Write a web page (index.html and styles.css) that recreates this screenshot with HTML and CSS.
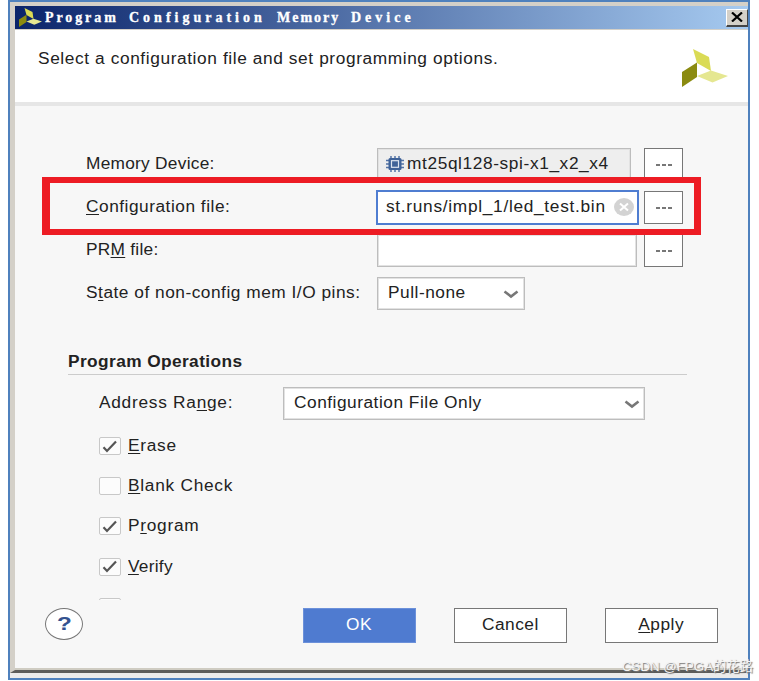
FILE: index.html
```html
<!DOCTYPE html>
<html lang="en">
<head>
<meta charset="utf-8">
<title>Program Configuration Memory Device</title>
<link rel="stylesheet" href="styles.css">
</head>
<body>
<svg class="defs" width="0" height="0">
  <symbol id="logo" viewBox="0 0 46 38">
    <path d="M11 0 27 8 29 22 15 14Z" fill="#dadb55"/>
    <path d="M0 23 15 13.500V28L0 38Z" fill="#8b8b10"/>
    <path d="M15 27 29 21.500 46 27 30.500 33.500Z" fill="#e5e791"/>
  </symbol>
  <symbol id="chevron" viewBox="0 0 16 9"><path d="M1.500 1.500 8 6.500 14.500 1.500" fill="none" stroke="#777" stroke-width="2.600"/></symbol>
  <symbol id="check" viewBox="0 0 16 13"><path d="M1.500 7.200 5 11 14 1.500" fill="none" stroke="#555" stroke-width="2.200"/></symbol>
</svg>
<div class="frame">
  <div class="window">
    <header class="titlebar">
      <svg class="title-logo"><use href="#logo"/></svg>
      <h1><span class="w1">Program</span> <span class="w2">Configuration</span> <span class="w3">Memory</span> <span class="w4">Device</span></h1>
      <button class="close" aria-label="Close"><svg width="12" height="10" viewBox="0 0 12 10"><path d="M1 .5 11 9.500M11 .5 1 9.500" stroke="#000" stroke-width="2.200"/></svg></button>
    </header>
    <section class="intro">
      <p><span class="t intro-text">Select a configuration file and set programming options.</span></p>
      <svg class="logo"><use href="#logo"/></svg>
    </section>
    <main>
      <div class="settings">
        <label class="row"><span class="name"><span class="t tight">Memory Device:</span></span>
          <span class="field readonly">
            <svg class="chip" viewBox="0 0 18 16"><path d="M5 0V16M9 0V16M13 0V16M0 4.500H18M0 8H18M0 11.500H18" stroke="#5474a6" stroke-width="1.500"/><rect x="2.500" y="2" width="13" height="12" rx="1.500" fill="#3f6298"/><rect x="5.500" y="4.700" width="7" height="6.600" fill="#3f6298" stroke="#dce4ef" stroke-width="1.200"/></svg>
            <span class="t device">mt25ql128-spi-x1_x2_x4</span></span>
          <button class="browse"><i></i><i></i><i></i></button></label>
        <label class="row"><span class="name"><span class="t"><u>C</u>onfiguration file:</span></span>
          <span class="field active"><span class="t path">st.runs/impl_1/led_test.bin</span>
            <svg class="clear" viewBox="0 0 20 18"><ellipse cx="10" cy="9" rx="10" ry="9" fill="#d3d3d3"/><path d="M6 5.500 14 12.500M14 5.500 6 12.500" stroke="#fff" stroke-width="2"/></svg></span>
          <button class="browse"><i></i><i></i><i></i></button></label>
        <label class="row"><span class="name"><span class="t tight">PR<u>M</u> file:</span></span>
          <span class="field"></span>
          <button class="browse"><i></i><i></i><i></i></button></label>
        <label class="row"><span class="name"><span class="t">S<u>t</u>ate of non-config mem I/O pins:</span></span>
          <span class="field select"><span class="t">Pull-none</span><svg class="chevron"><use href="#chevron"/></svg></span></label>
        <div class="highlight"></div>
      </div>
      <section class="operations">
        <h2><span class="t heading">Program Operations</span></h2>
        <div class="range"><span class="name"><span class="t loose">Address Ra<u>n</u>ge:</span></span>
          <span class="field wide"><span class="t">Configuration File Only</span><svg class="chevron"><use href="#chevron"/></svg></span></div>
        <div class="checks">
          <label><span class="box"><svg><use href="#check"/></svg></span><span class="t loose"><u>E</u>rase</span></label>
          <label><span class="box"></span><span class="t loose"><u>B</u>lank Check</span></label>
          <label><span class="box"><svg><use href="#check"/></svg></span><span class="t loose">P<u>r</u>ogram</span></label>
          <label><span class="box"><svg><use href="#check"/></svg></span><span class="t tight"><u>V</u>erify</span></label>
          <label><span class="box"></span></label>
        </div>
      </section>
      <footer>
        <button class="help"><b>?</b></button>
        <button class="action primary"><span class="t">OK</span></button>
        <button class="action"><span class="t">Cancel</span></button>
        <button class="action"><span class="t"><u>A</u>pply</span></button>
      </footer>
    </main>
  </div>
</div>
<div class="watermark">CSDN @FPGA的花路</div>
</body>
</html>
```
FILE: styles.css
```css
* { box-sizing: border-box; }
body {
  margin: 0;
  width: 759px;
  height: 681px;
  overflow: hidden;
  position: relative;
  background: #fff;
  color: #222;
  font: 16px/20px "Liberation Sans", Arial, sans-serif;
}
.defs { position: absolute; }
svg { display: block; flex: none; }
h1, h2, p { margin: 0; }
button { font: inherit; color: inherit; padding: 0; border-radius: 0; }
u { text-decoration-thickness: 1px; text-underline-offset: 2px; }
.t {
  display: inline-block;
  white-space: nowrap;
  letter-spacing: .480px;
  transform: scaleX(1.08);
  transform-origin: left;
}
.tight { letter-spacing: .250px; }
.loose { letter-spacing: .680px; }
.heading { letter-spacing: .380px; }
.intro-text { letter-spacing: .560px; }

.frame {
  width: 742px;
  height: 680px;
  margin-left: 8px;
  border: 2px solid #4f81bd;
  background: #ebebeb;
}
.window {
  height: 671px;
  border-left: 5px solid #d4d0c8;
  border-top: 4px solid #d4d0c8;
  border-bottom: 3px solid #5c5c5a;
  box-shadow: inset 0 -2px #cfccc2;
  background: #f7f7f7;
}
.titlebar {
  height: 23px;
  display: flex;
  align-items: center;
  background: linear-gradient(90deg, #0a246a, #a6caf0);
  color: #fff;
}
.title-logo { width: 25px; height: 19px; margin: 0 2px 0 3px; }
.titlebar h1 {
  display: flex;
  font: bold 14px/20px "Liberation Serif", serif;
  -webkit-text-stroke: .3px #fff;
  white-space: nowrap;
}
.w1 { width: 84px; letter-spacing: 2.900px; }
.w2 { width: 148px; letter-spacing: 4px; }
.w3 { width: 74px; letter-spacing: 2px; }
.w4 { width: 66px; letter-spacing: 4px; }
.close {
  width: 22px;
  height: 18px;
  margin-left: auto;
  display: grid;
  place-items: center;
  background: #d4d0c8;
  border: 1px solid #fff;
  border-right-color: #444;
  border-bottom: 2px solid #444;
}
.intro {
  height: 77px;
  padding: 19px 20px 0 23px;
  display: flex;
  justify-content: space-between;
  background: #fff;
  border-top: 1px solid #d4d0c8;
  border-bottom: 4px solid #e6e6e6;
}
.logo { width: 46px; height: 38px; }

.settings { position: relative; padding: 42px 0 0 71px; }
.row { display: flex; height: 43px; }
.row .name { width: 291px; padding-top: 6px; }
.field {
  display: flex;
  align-items: center;
  width: 260px;
  height: 33px;
  margin-right: 7px;
  padding: 0 9px 2px;
  background: #fff;
  border: 1px solid #bdbdbd;
  box-shadow: inset 0 0 0 1px #e2e2e2;
}
.readonly { width: 254px; margin-right: 13px; padding: 0 7px 2px 8px; background: #eee; }
.device { margin-left: 3px; letter-spacing: .570px; }
.path { letter-spacing: .650px; }
.chip { width: 18px; height: 16px; }
.active { width: 263px; height: 35px; margin: -1px 5px 0 -1px; border: 2px solid #4f7dd1; box-shadow: none; padding: 0 3px 2px 8px; justify-content: space-between; }
.clear { width: 20px; height: 18px; }
.select { width: 148px; padding: 0 5px 2px 10px; justify-content: space-between; }
.chevron { width: 16px; height: 9px; margin-top: 3px; }
.browse {
  width: 39px;
  height: 33px;
  display: flex;
  align-items: center;
  justify-content: center;
  gap: 2px;
  background: #fff;
  border: 1px solid #777;
}
.browse i { width: 4px; height: 2px; margin-top: 1px; background: #777; }
.highlight {
  position: absolute;
  left: 27px;
  top: 71px;
  width: 659px;
  height: 58px;
  border: solid #ed1c24;
  border-width: 6px 7px 6px 8px;
}

.operations { margin: 32px 61px 0 53px; }
h2 { height: 23px; font-size: 16px; line-height: 20px; border-bottom: 1px solid #ccc; }
.range { display: flex; padding: 12px 0 0 31px; }
.range .name { width: 184px; padding-top: 6px; }
.wide { width: 362px; margin: 0; padding: 0 4px 2px 10px; justify-content: space-between; }
.checks { height: 180px; padding: 16px 0 0 31px; overflow: hidden; }
.checks label { display: flex; align-items: center; height: 20px; margin-bottom: 20.200px; }
.box {
  width: 22px;
  height: 18px;
  margin-right: 7px;
  display: grid;
  place-items: center;
  background: #fcfcfc;
  border: 1px solid #c8c8c8;
  border-radius: 2px;
}
.box svg { width: 16px; height: 13px; }
footer { display: flex; align-items: flex-start; padding: 8px 0 0 30px; }
.help {
  width: 38px;
  height: 32px;
  border: 1px solid #777;
  border-radius: 50%;
  background: #fff;
  color: #34528f;
  font-size: 18px;
}
.help b { display: inline-block; transform: scaleX(1.350); }
.action { width: 113px; height: 35px; margin-left: 38px; padding-bottom: 2px; background: #fff; border: 1px solid #777; }
.action .t { transform-origin: center; }
.help + .action { margin-left: 220px; }
.primary { background: #4f7bd0; border-color: #6c91da; color: #fff; }
.watermark {
  position: absolute;
  left: 622px;
  top: 657px;
  font: 13.300px/20px "Liberation Sans", "Noto Sans CJK SC", sans-serif;
  white-space: nowrap;
  color: #f4f4f4;
  text-shadow: 1px 1px 1px #777;
}
```
